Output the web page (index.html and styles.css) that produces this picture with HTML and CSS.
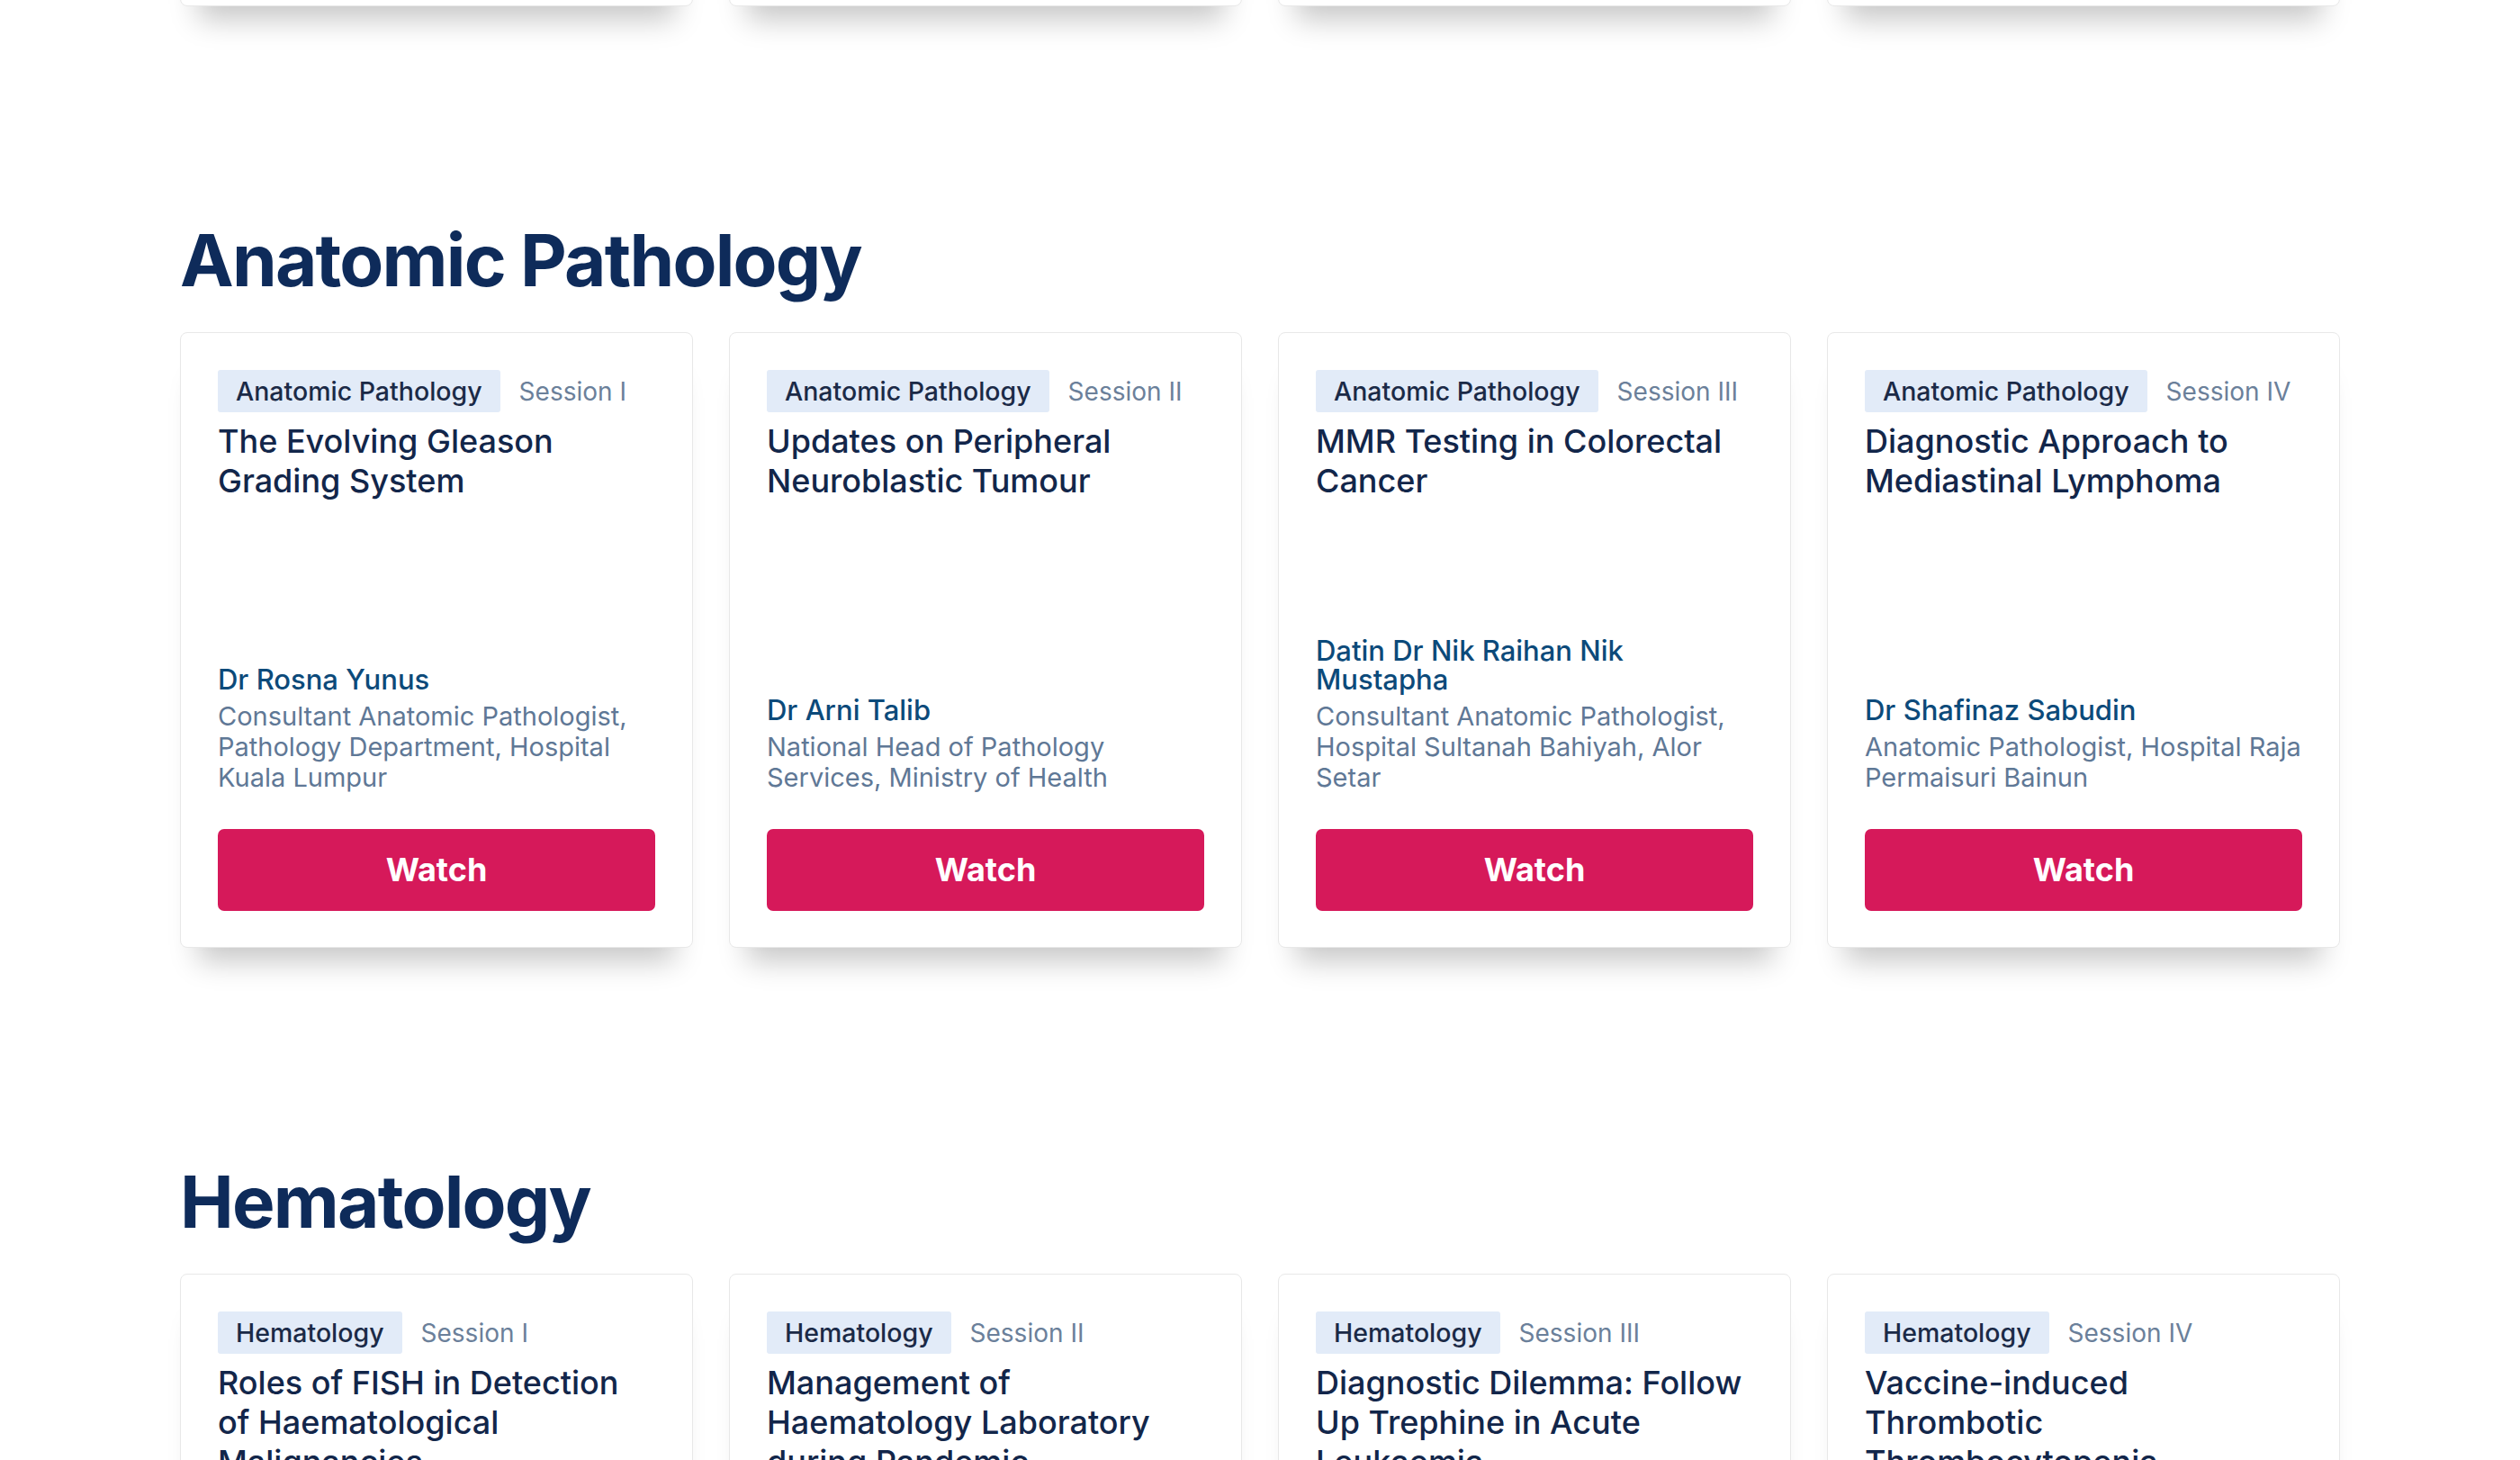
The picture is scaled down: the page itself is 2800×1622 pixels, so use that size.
FILE: index.html
```html
<!DOCTYPE html>
<html lang="en">
<head>
<meta charset="utf-8">
<title>Sessions</title>
<link rel="stylesheet" href="styles.css">
</head>
<body>
<div class="page">
  <div class="grid stubs">
    <div class="stub"></div>
    <div class="stub"></div>
    <div class="stub"></div>
    <div class="stub"></div>
  </div>

  <section class="section">
    <h2 class="section-title">Anatomic Pathology</h2>
    <div class="grid">
      <article class="card">
        <div class="meta"><span class="tag">Anatomic Pathology</span><span class="session">Session I</span></div>
        <h3 class="title">The Evolving Gleason Grading System</h3>
        <div class="speaker">
          <p class="name">Dr Rosna Yunus</p>
          <p class="aff">Consultant Anatomic Pathologist, Pathology Department, Hospital Kuala Lumpur</p>
        </div>
        <a class="btn" href="#">Watch</a>
      </article>
      <article class="card">
        <div class="meta"><span class="tag">Anatomic Pathology</span><span class="session">Session II</span></div>
        <h3 class="title">Updates on Peripheral Neuroblastic Tumour</h3>
        <div class="speaker">
          <p class="name">Dr Arni Talib</p>
          <p class="aff">National Head of Pathology Services, Ministry of Health</p>
        </div>
        <a class="btn" href="#">Watch</a>
      </article>
      <article class="card">
        <div class="meta"><span class="tag">Anatomic Pathology</span><span class="session">Session III</span></div>
        <h3 class="title">MMR Testing in Colorectal Cancer</h3>
        <div class="speaker">
          <p class="name">Datin Dr Nik Raihan Nik Mustapha</p>
          <p class="aff">Consultant Anatomic Pathologist, Hospital Sultanah Bahiyah, Alor Setar</p>
        </div>
        <a class="btn" href="#">Watch</a>
      </article>
      <article class="card">
        <div class="meta"><span class="tag">Anatomic Pathology</span><span class="session">Session IV</span></div>
        <h3 class="title">Diagnostic Approach to Mediastinal Lymphoma</h3>
        <div class="speaker">
          <p class="name">Dr Shafinaz Sabudin</p>
          <p class="aff">Anatomic Pathologist, Hospital Raja Permaisuri Bainun</p>
        </div>
        <a class="btn" href="#">Watch</a>
      </article>
    </div>
  </section>

  <section class="section">
    <h2 class="section-title">Hematology</h2>
    <div class="grid">
      <article class="card">
        <div class="meta"><span class="tag">Hematology</span><span class="session">Session I</span></div>
        <h3 class="title">Roles of FISH in Detection of Haematological Malignancies</h3>
        <a class="btn" href="#">Watch</a>
      </article>
      <article class="card">
        <div class="meta"><span class="tag">Hematology</span><span class="session">Session II</span></div>
        <h3 class="title">Management of Haematology Laboratory during Pandemic</h3>
        <a class="btn" href="#">Watch</a>
      </article>
      <article class="card">
        <div class="meta"><span class="tag">Hematology</span><span class="session">Session III</span></div>
        <h3 class="title">Diagnostic Dilemma: Follow Up Trephine in Acute Leukaemia</h3>
        <a class="btn" href="#">Watch</a>
      </article>
      <article class="card">
        <div class="meta"><span class="tag">Hematology</span><span class="session">Session IV</span></div>
        <h3 class="title">Vaccine-induced Thrombotic Thrombocytopenia</h3>
        <a class="btn" href="#">Watch</a>
      </article>
    </div>
  </section>
</div>
</body>
</html>
```

FILE: styles.css
```css
* { box-sizing: border-box; }

html, body {
  margin: 0;
  padding: 0;
  background: #ffffff;
  font-family: Inter, "Noto Sans", "Liberation Sans", sans-serif;
}

.page {
  width: 2400px;
  margin: 0 0 0 200px;
}

.grid {
  display: grid;
  grid-template-columns: repeat(4, 1fr);
  gap: 40px;
}

/* bottom of the previous section's cards, scrolled mostly out of view */
.stubs {
  margin-top: -193px;
}

.stub {
  height: 200px;
  background: #fff;
  border: 1px solid #e8e8e8;
  border-radius: 8px;
  box-shadow: 0 35px 30px -20px rgba(0, 0, 0, 0.22);
}

.section {
  padding-top: 232px;
}

.section-title {
  margin: 0 0 30px;
  font-size: 80px;
  line-height: 100px;
  font-weight: 700;
  letter-spacing: -1.8px;
  color: #0e2b5a;
}

.card {
  display: flex;
  flex-direction: column;
  min-height: 684px;
  padding: 41px 41px 40px;
  background: #fff;
  border: 1px solid #e8e8e8;
  border-radius: 8px;
  box-shadow: 0 35px 30px -20px rgba(0, 0, 0, 0.22);
}

.meta {
  display: flex;
  align-items: center;
  gap: 21px;
}

.tag {
  display: inline-block;
  padding: 0 20px;
  height: 47px;
  line-height: 47px;
  background: #e2ebf8;
  border-radius: 3px;
  color: #1b2a47;
  font-size: 28.5px;
  font-weight: 500;
}

.session {
  color: #6b809a;
  font-size: 28px;
}

.title {
  margin: 10px 0 0;
  font-size: 36px;
  line-height: 44px;
  font-weight: 500;
  color: #12264a;
}

.speaker {
  margin-top: auto;
}

.name {
  margin: 0;
  font-size: 31px;
  line-height: 32px;
  font-weight: 500;
  color: #0c4a7a;
}

.aff {
  margin: 8px 0 0;
  font-size: 29px;
  line-height: 34px;
  color: #5f7896;
}

.btn {
  display: block;
  margin-top: 40px;
  height: 91px;
  line-height: 91px;
  text-align: center;
  background: #d6195a;
  border-radius: 7px;
  color: #fff;
  font-size: 36px;
  font-weight: 700;
  text-decoration: none;
}
```
